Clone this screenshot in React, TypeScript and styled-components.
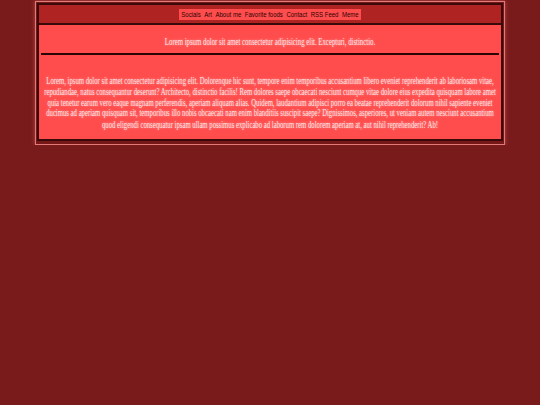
import React from 'react';
import styled, { createGlobalStyle } from 'styled-components';

const GlobalStyle = createGlobalStyle`
  html, body {
    margin: 0;
    padding: 0;
    background-color: #7a1b1b;
    min-height: 100%;
  }
`;

const Frame = styled.div`
  width: 466px;
  margin: 1px auto 0;
  padding: 1px 1px 3px;
  border: 1px solid #e27a7a;
  background-color: #761818;
  box-shadow: 0 0 4px rgba(255, 130, 130, 0.45);
`;

const Inner = styled.div`
  border: 2px solid #3a0909;
`;

const Header = styled.header`
  height: 18px;
  display: flex;
  align-items: center;
  justify-content: center;
  background-color: #b02323;
  border-bottom: 2px solid #3a0909;
`;

const Nav = styled.nav`
  display: flex;
  align-items: center;
  gap: 3.6px;
  height: 11px;
  padding: 0 2px;
  background-color: #ff4d4d;
`;

const NavLink = styled.a`
  font-family: 'Liberation Sans', Arial, sans-serif;
  font-size: 6px;
  color: #2a0202;
  text-decoration: none;
  white-space: nowrap;
  transform: scaleY(1.3);
`;

const Main = styled.main`
  background-color: #ff4d4d;
  padding: 13.5px 2px 17.7px;
`;

/* the reference text is tall and narrow, so it is stretched vertically */
const Heading = styled.h1`
  margin: 0;
  font-family: 'Liberation Serif', 'Times New Roman', serif;
  font-weight: normal;
  font-size: 6.8px;
  line-height: 6.9px;
  text-align: center;
  color: #ffe2e2;
  text-shadow: 0 0 2px rgba(255, 255, 255, 0.5);
  transform: scaleY(1.45);
`;

const Rule = styled.hr`
  margin: 7.5px 0 0;
  height: 2px;
  border: none;
  background-color: #2a0505;
`;

const Paragraph = styled.p`
  margin: 29.4px 0 0;
  padding: 0;
  font-family: 'Liberation Serif', 'Times New Roman', serif;
  font-size: 6.72px;
  line-height: 7.38px;
  text-align: center;
  color: #ffe2e2;
  text-shadow: 0 0 2px rgba(255, 255, 255, 0.5);
  transform: scaleY(1.45);
`;

const links = ['Socials', 'Art', 'About me', 'Favorite foods', 'Contact', 'RSS Feed', 'Meme'];

const App: React.FC = () => {
  return (
    <>
      <GlobalStyle />
      <Frame>
        <Inner>
          <Header>
            <Nav>
              {links.map((l) => (
                <NavLink key={l} href="#">
                  {l}
                </NavLink>
              ))}
            </Nav>
          </Header>
          <Main>
            <Heading>Lorem ipsum dolor sit amet consectetur adipisicing elit. Excepturi, distinctio.</Heading>
            <Rule />
            <Paragraph>
              Lorem, ipsum dolor sit amet consectetur adipisicing elit. Dolorenque hic sunt, tempore enim temporibus
              accusantium libero eveniet reprehenderit ab laboriosam vitae, repudiandae, natus consequantur deserunt?
              Architecto, distinctio facilis! Rem dolores saepe obcaecati nesciunt cumque vitae dolore eius expedita
              quisquam labore amet quia tenetur earum vero eaque magnam perferendis, aperiam aliquam alias. Quidem,
              laudantium adipisci porro ea beatae reprehenderit dolorum nihil sapiente eveniet ducimus ad aperiam
              quisquam sit, temporibus illo nobis obcaecati nam enim blanditiis suscipit saepe? Dignissimos,
              asperiores, ut veniam autem nesciunt accusantium quod eligendi consequatur ipsam ullam possimus
              explicabo ad laborum rem dolorem aperiam at, aut nihil reprehenderit? Ab!
            </Paragraph>
          </Main>
        </Inner>
      </Frame>
    </>
  );
};

export default App;
